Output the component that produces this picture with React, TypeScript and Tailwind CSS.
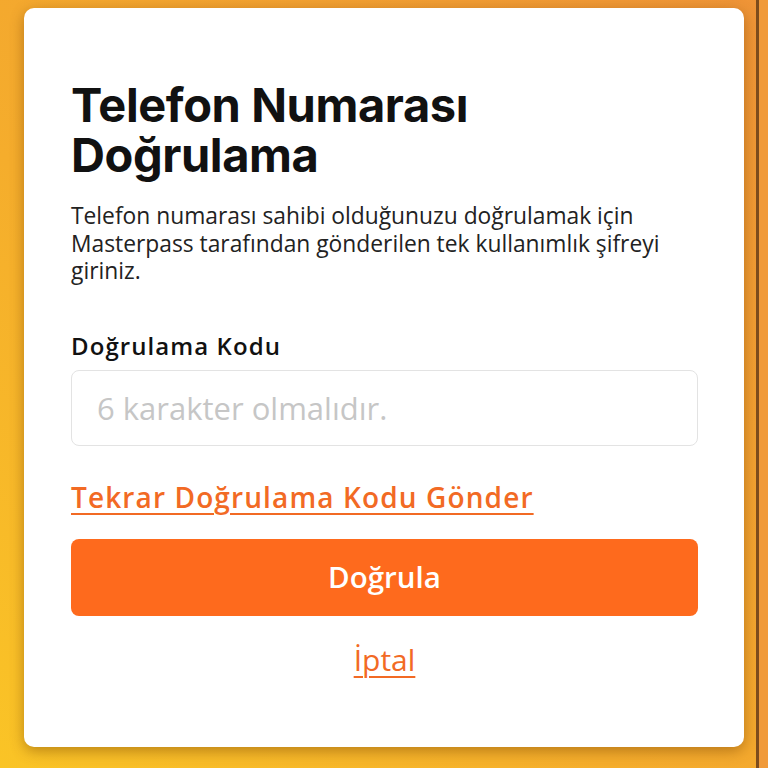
import React from "react";

export default function App() {
  return (
    <div className="relative w-[768px] h-[768px] overflow-hidden bg-[linear-gradient(45deg,#fac426_0%,#f5ad2c_40%,#ef9437_100%)] font-['Open_Sans','Liberation_Sans',sans-serif]">
      <div className="pt-[8px] pl-[24px]">
        <div className="w-[720px] h-[739px] bg-white rounded-[10px] shadow-[0_4px_14px_rgba(110,60,0,0.45)] pt-[72px] px-[47px] flex flex-col">
          <h1 className="font-['Inter','Liberation_Sans',sans-serif] text-[47px] leading-[50px] font-bold text-[#111111] tracking-[-0.4px]">
            Telefon Numarası
            <br />
            Doğrulama
          </h1>
          <p className="mt-[22px] text-[22.8px] leading-[27.5px] text-[#222222]">
            Telefon numarası sahibi olduğunuzu doğrulamak için
            <br />
            Masterpass tarafından gönderilen tek kullanımlık şifreyi
            <br />
            giriniz.
          </p>
          <label className="mt-[45px] text-[24px] leading-[32px] font-semibold text-[#111111] tracking-[0.045em]">
            Doğrulama Kodu
          </label>
          <input
            className="mt-[8px] w-[627px] h-[76px] border border-[#e3e3e3] rounded-[8px] pl-[25px] text-[31px] text-[#222] placeholder:text-[#c6c6c6] outline-none"
            placeholder="6 karakter olmalıdır."
          />
          <a className="mt-[33px] self-start text-[28px] leading-[36px] font-semibold text-[#f26a24] underline decoration-2 underline-offset-[5px] tracking-[0.04em]">
            Tekrar Doğrulama Kodu Gönder
          </a>
          <button className="mt-[24px] w-[627px] h-[77px] rounded-[8px] bg-[#fe6a1d] text-white text-[29.5px] font-semibold flex items-center justify-center">
            Doğrula
          </button>
          <div className="mt-[26px] w-[627px] flex justify-center">
            <a className="text-[30px] leading-[36px] text-[#f26a24] underline decoration-2 underline-offset-[5px]">
              İptal
            </a>
          </div>
        </div>
      </div>
      <div className="absolute top-0 bottom-0 left-[756px] w-[3px] bg-[#7d4c1c]" />
      <div className="absolute top-0 bottom-0 left-[759px] right-0 bg-[#f09a3a]" />
    </div>
  );
}
